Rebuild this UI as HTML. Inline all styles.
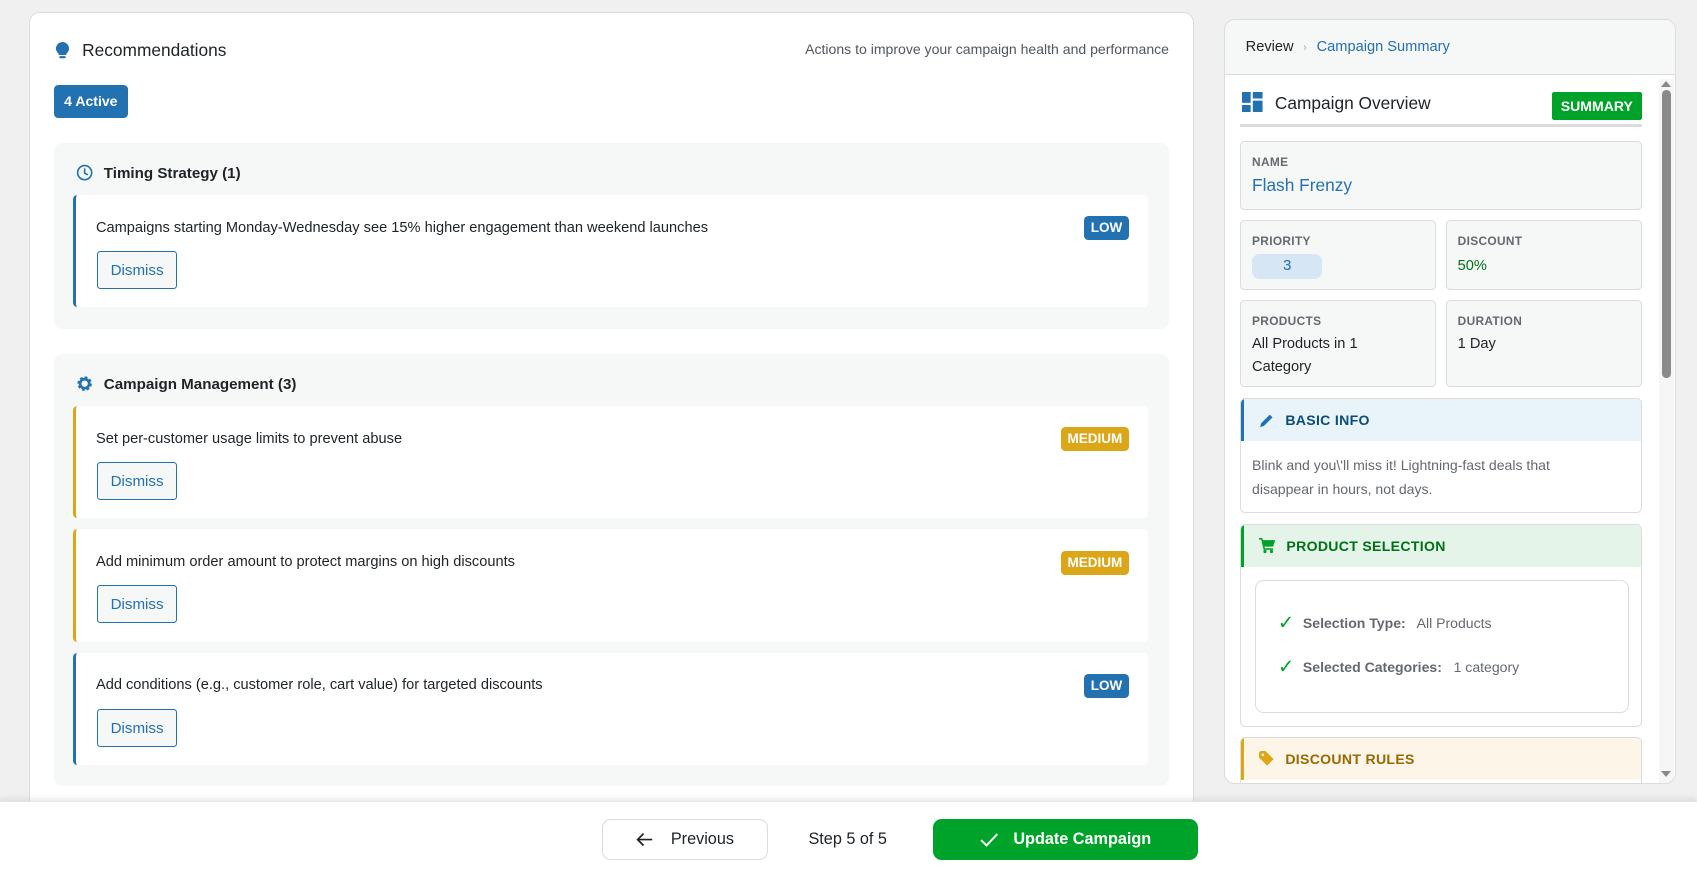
<!DOCTYPE html>
<html><head><meta charset="utf-8"><style>
html{zoom:1.0823}
*{box-sizing:border-box;margin:0;padding:0}
body{width:1568px;height:810px;overflow:hidden;background:#f0f0f1;font-family:"Liberation Sans",sans-serif;color:#1d2327;position:relative}
.abs{position:absolute}
.card{left:27px;top:11px;width:1076px;height:760px;background:#fff;border:1px solid #dcdcde;border-radius:10px}
.grp{position:absolute;left:22px;width:1030px;background:#f6f7f7;border-radius:8px}
.gh{position:absolute;left:20px;font-size:14px;font-weight:bold;display:flex;align-items:center;gap:10px}
.item{position:absolute;left:18px;width:993px;height:104px;background:#fff;border-left:3px solid #2271b1;border-radius:4px}
.item.m{border-left-color:#dba617}
.item .t{position:absolute;left:18px;top:23px;font-size:13.5px}
.item .d{position:absolute;left:19px;top:52px;width:74px;height:35px;border:1px solid #2271b1;border-radius:3px;background:#f6f7f7;color:#2271b1;font-size:14px;line-height:35px;text-align:center}
.badge{position:absolute;right:18px;top:20px;height:22px;padding:0 6px;border-radius:4px;color:#fff;font-weight:bold;font-size:12.5px;line-height:22px;background:#2271b1}
.badge.m{background:#dba617}
.panel{left:1131px;top:18px;width:418px;height:706px;background:#fff;border:1px solid #dcdcde;border-radius:10px;overflow:hidden}
.box{position:absolute;background:#f6f7f7;border:1px solid #dcdcde;border-radius:4px}
.lbl{position:absolute;left:10px;top:12px;font-size:11px;font-weight:bold;color:#646970;letter-spacing:.3px}
.val{position:absolute;left:10px;top:32px;font-size:13.5px;line-height:21px}
.sec{position:absolute;left:14px;width:371px;border:1px solid #dcdcde;border-radius:5px;overflow:hidden;background:#fff}
.sh{height:39px;display:flex;align-items:center;gap:10px;padding-left:14px;font-size:13px;font-weight:bold;letter-spacing:.3px;border-left:3px solid}
</style></head><body>
<div class="abs card">
  <div class="abs" style="left:24px;top:25px;display:flex;align-items:center;gap:12px;font-size:16px">
    <svg width="12" height="16" viewBox="0 0 12 16"><path d="M6 0a6 6 0 0 0-3.5 10.9V12h7v-1.1A6 6 0 0 0 6 0z" fill="#2271b1"/><rect x="3" y="13" width="6" height="2" rx="1" fill="#2271b1"/></svg>
    <span>Recommendations</span></div>
  <div class="abs" style="right:22px;top:26px;font-size:13px;color:#50575e">Actions to improve your campaign health and performance</div>
  <div class="abs" style="left:22px;top:67px;width:68px;height:30px;background:#2271b1;border-radius:4px;color:#fff;font-weight:bold;font-size:13px;line-height:30px;text-align:center">4 Active</div>
  <div class="grp" style="top:120px;height:172px">
    <div class="gh" style="top:20px"><svg width="16" height="16" viewBox="0 0 16 16"><circle cx="8" cy="8" r="6.5" fill="none" stroke="#2271b1" stroke-width="1.5"/><path d="M8 4v4.5l3 1.5" fill="none" stroke="#2271b1" stroke-width="1.5"/></svg>Timing Strategy (1)</div>
    <div class="item" style="top:48px"><div class="t">Campaigns starting Monday-Wednesday see 15% higher engagement than weekend launches</div><div class="d">Dismiss</div><div class="badge">LOW</div></div>
  </div>
  <div class="grp" style="top:315px;height:399px">
    <div class="gh" style="top:20px"><svg width="16" height="16" viewBox="0 0 16 16"><circle cx="8" cy="8" r="5" fill="none" stroke="#2271b1" stroke-width="3.4" stroke-dasharray="2.2 1.7"/><circle cx="8" cy="8" r="4.2" fill="none" stroke="#2271b1" stroke-width="2.5"/></svg>Campaign Management (3)</div>
    <div class="item m" style="top:48px"><div class="t">Set per-customer usage limits to prevent abuse</div><div class="d">Dismiss</div><div class="badge m">MEDIUM</div></div>
    <div class="item m" style="top:162px"><div class="t">Add minimum order amount to protect margins on high discounts</div><div class="d">Dismiss</div><div class="badge m">MEDIUM</div></div>
    <div class="item" style="top:276px"><div class="t">Add conditions (e.g., customer role, cart value) for targeted discounts</div><div class="d">Dismiss</div><div class="badge">LOW</div></div>
  </div>
</div>

<div class="abs panel">
  <div class="abs" style="left:0;top:0;width:418px;height:50px;background:#f6f7f7;border-bottom:1px solid #dcdcde"></div>
  <div class="abs" style="left:19px;top:17px;font-size:13.5px"><span>Review</span><span style="color:#a7aaad;font-size:10px;margin:0 9px">›</span><span style="color:#2271b1">Campaign Summary</span></div>
  <div class="abs" style="left:401px;top:54px;width:14px;height:652px;background:#f6f6f6"></div>
  <div class="abs" style="left:403px;top:56px;width:0;height:0;border:5px solid transparent;border-bottom:6px solid #888;border-top:0"></div>
  <div class="abs" style="left:404px;top:64px;width:8px;height:266px;background:#8a8a8a;border-radius:4px"></div>
  <div class="abs" style="left:403px;top:693px;width:0;height:0;border:5px solid transparent;border-top:6px solid #888;border-bottom:0"></div>

  <div class="abs" style="left:16px;top:66px"><svg width="19" height="19" viewBox="0 0 19 19" fill="#2271b1"><rect x="0" y="0" width="8" height="10"/><rect x="10" y="0" width="9" height="6"/><rect x="0" y="12" width="8" height="7"/><rect x="10" y="8" width="9" height="11"/></svg></div>
  <div class="abs" style="left:46px;top:67px;font-size:16px">Campaign Overview</div>
  <div class="abs" style="left:302px;top:66px;width:83px;height:26px;background:#00a32a;border-radius:2px;color:#fff;font-weight:bold;font-size:13px;line-height:26px;text-align:center">SUMMARY</div>
  <div class="abs" style="left:14px;top:96px;width:371px;height:2px;background:#dcdcde"></div>

  <div class="box" style="left:14px;top:111px;width:371px;height:64px"><div class="lbl">NAME</div><div class="val" style="font-size:16px;color:#2271b1;top:30px">Flash Frenzy</div></div>
  <div class="box" style="left:14px;top:184px;width:181px;height:65px"><div class="lbl">PRIORITY</div><div class="abs" style="left:10px;top:31px;width:65px;height:23px;background:#d6e6f5;border-radius:7px;color:#2271b1;font-size:14px;line-height:23px;text-align:center">3</div></div>
  <div class="box" style="left:204px;top:184px;width:181px;height:65px"><div class="lbl">DISCOUNT</div><div class="val" style="color:#007017">50%</div></div>
  <div class="box" style="left:14px;top:258px;width:181px;height:81px"><div class="lbl">PRODUCTS</div><div class="val" style="top:30px">All Products in 1<br>Category</div></div>
  <div class="box" style="left:204px;top:258px;width:181px;height:81px"><div class="lbl">DURATION</div><div class="val" style="top:30px">1 Day</div></div>

  <div class="sec" style="top:349px;height:106px">
    <div class="sh" style="background:#e8f4fa;border-color:#2271b1;color:#0a4b78"><svg width="14" height="14" viewBox="0 0 14 14"><path d="M1 13l1-3.5L10 1.5l2.5 2.5L4.5 12z" fill="#2271b1"/></svg>BASIC INFO</div>
    <div style="padding:12px 50px 0 10px;font-size:13px;line-height:22px;color:#646970">Blink and you\'ll miss it! Lightning-fast deals that disappear in hours, not days.</div>
  </div>
  <div class="sec" style="top:465px;height:188px">
    <div class="sh" style="background:#e4f4e8;border-color:#00a32a;color:#007017"><svg width="15" height="14" viewBox="0 0 15 14"><path d="M0 0h3l.6 2H15l-2 6H5l.5 1.5H13V11H4.3L2 1.5H0z" fill="#00a32a"/><circle cx="5.5" cy="12.5" r="1.5" fill="#00a32a"/><circle cx="11.5" cy="12.5" r="1.5" fill="#00a32a"/></svg>PRODUCT SELECTION</div>
    <div class="abs" style="left:13px;top:51px;width:345px;height:123px;border:1px solid #dcdcde;border-radius:8px">
      <div class="abs" style="left:20px;top:28px;font-size:13px;color:#646970;display:flex;align-items:center"><span style="color:#00a32a;font-size:18px;margin-right:8px">✓</span><b style="font-weight:600">Selection Type:</b>&nbsp;&nbsp; All Products</div>
      <div class="abs" style="left:20px;top:68px;font-size:13px;color:#646970;display:flex;align-items:center"><span style="color:#00a32a;font-size:18px;margin-right:8px">✓</span><b style="font-weight:600">Selected Categories:</b>&nbsp;&nbsp; 1 category</div>
    </div>
  </div>
  <div class="sec" style="top:662px;height:80px">
    <div class="sh" style="background:#fcf5e8;border-color:#dba617;color:#996800"><svg width="14" height="14" viewBox="0 0 14 14"><path d="M0 1.5V6l7.5 7.5L13.5 7.5 6 0H1.5z" fill="#dba617"/><circle cx="3.5" cy="3.5" r="1.2" fill="#fcf5e8"/></svg>DISCOUNT RULES</div>
  </div>
</div>

<div class="abs" style="left:0;top:740px;width:1568px;height:70px;background:#fff;box-shadow:0 -3px 6px rgba(0,0,0,.08);border-top:1px solid #e5e5e5"></div>
<div class="abs" style="left:556px;top:757px;width:154px;height:38px;border:1px solid #dcdcde;border-radius:8px;background:#fff;display:flex;align-items:center;justify-content:center;gap:16px;font-size:15px">
  <svg width="16" height="14" viewBox="0 0 16 14"><path d="M15 7H2M7 1.5L1.5 7 7 12.5" fill="none" stroke="#1d2327" stroke-width="1.6"/></svg>Previous</div>
<div class="abs" style="left:747px;top:767px;font-size:15px">Step 5 of 5</div>
<div class="abs" style="left:862px;top:757px;width:245px;height:38px;background:#00a32a;border-radius:8px;display:flex;align-items:center;justify-content:center;gap:14px;font-size:15px;font-weight:bold;color:#fff">
  <svg width="17" height="13" viewBox="0 0 17 13"><path d="M1 6.5l5 5L16 1" fill="none" stroke="#fff" stroke-width="1.8"/></svg>Update Campaign</div>
</body></html>
